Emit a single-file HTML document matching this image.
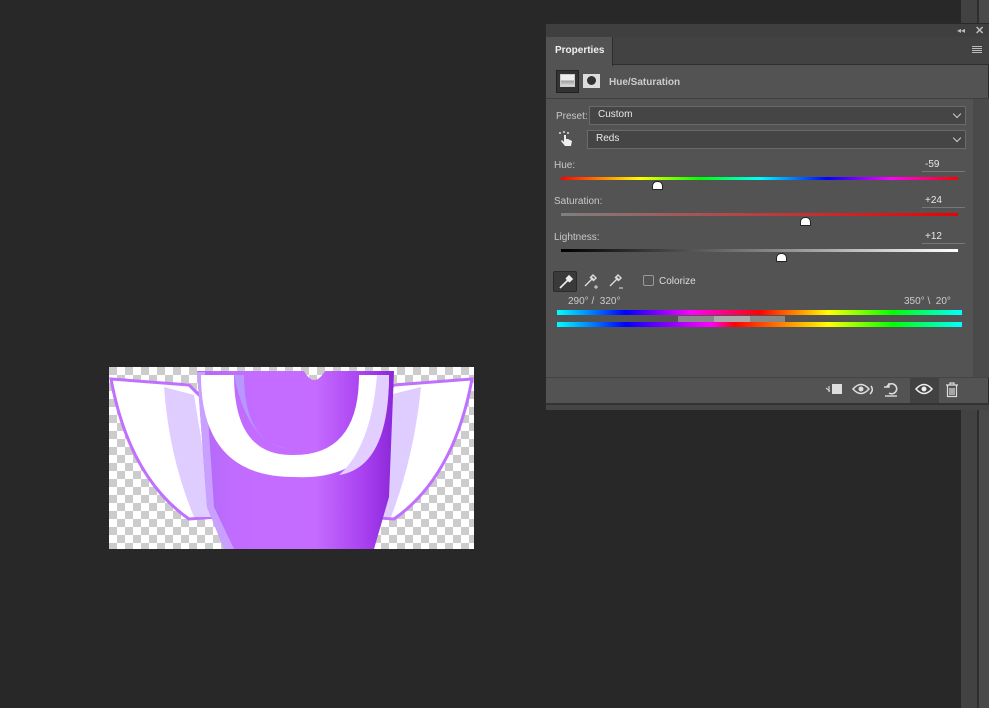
<!DOCTYPE html>
<html><head><style>
*{margin:0;padding:0;box-sizing:border-box}
body{width:989px;height:708px;background:#282828;position:relative;overflow:hidden;font-family:"Liberation Sans",sans-serif;font-size:10px;color:#ddd}
.a{position:absolute}
.dd{position:absolute;background:#454545;border:1px solid #6a6a6a;height:19px;color:#e8e8e8;padding:2px 8px;font-size:10px}
.dd:after{content:"";position:absolute;right:5px;top:4px;width:5px;height:5px;border-right:1px solid #ccc;border-bottom:1px solid #ccc;transform:rotate(45deg)}
.lbl{position:absolute;color:#c8c8c8;font-size:10px}
.val{position:absolute;color:#e8e8e8;font-size:10px;border-bottom:1px solid #777;width:43px;padding-left:3px;height:13px}
.thumb{position:absolute;width:11px;height:9px;background:#fff;border:1px solid #222;border-radius:5px 5px 1px 1px}
</style></head><body>
<div class="a" style="left:961px;top:0;width:16px;height:708px;background:#424242"></div>
<div class="a" style="left:977px;top:0;width:2px;height:708px;background:#2e2e2e"></div>
<div class="a" style="left:979px;top:0;width:10px;height:708px;background:#4a4a4a"></div>

<!-- image -->
<svg class="a" style="left:109px;top:367px" width="365" height="182" viewBox="0 0 365 182">
<defs><pattern id="ck" width="16" height="16" patternUnits="userSpaceOnUse"><rect width="16" height="16" fill="#fff"/><rect width="8" height="8" fill="#ccc"/><rect x="8" y="8" width="8" height="8" fill="#ccc"/></pattern>
<linearGradient id="bd" x1="0" x2="1"><stop offset="0" stop-color="#b06af5"/><stop offset="0.2" stop-color="#c26cff"/><stop offset="0.6" stop-color="#c56cff"/><stop offset="0.85" stop-color="#a840f0"/><stop offset="1" stop-color="#8a28d8"/></linearGradient></defs>
<rect width="365" height="182" fill="url(#ck)"/>
<path d="M2 12 L80 18 L100 38 L110 150 L80 152 Q20 110 2 12Z" fill="#fff" stroke="#c070ff" stroke-width="3"/>
<path d="M55 20 L85 28 L105 150 L85 150 Q60 90 55 20Z" fill="#e0cdff"/>
<path d="M363 12 L285 18 L265 38 L255 150 L285 152 Q345 110 363 12Z" fill="#fff" stroke="#c070ff" stroke-width="3"/>
<path d="M312 20 L280 28 L262 150 L282 150 Q305 90 312 20Z" fill="#e0cdff"/>
<path d="M88 4 L195 4 Q205 22 216 4 L285 4 L280 130 L265 182 L115 182 L98 140 Z" fill="url(#bd)"/>
<path d="M88 5 L98 140 L115 182 L125 182 L105 140 L96 5Z" fill="#c9a0ff"/>
<path d="M92 8 L125 8 Q125 90 185 88 Q250 88 250 8 L280 8 Q280 115 185 110 Q92 110 92 8Z" fill="#fff"/>
<path d="M250 8 L280 8 Q280 100 230 108 Q262 80 268 8Z" fill="#e2cfff"/>
<path d="M125 8 L135 8 Q135 80 185 82 Q140 82 125 8Z" fill="#b898ff"/>
</svg>

<!-- panel -->
<div class="a" style="left:545px;top:23px;width:444px;height:387px;background:#535353;border:1px solid #2a2a2a"></div>
<div class="a" style="left:546px;top:24px;width:443px;height:13px;background:#3f3f3f"></div>
<div class="a" style="left:957px;top:26px;font-size:8px;color:#bbb">◂◂</div>
<div class="a" style="left:975px;top:24px;font-size:11px;color:#bbb;font-weight:bold">✕</div>
<div class="a" style="left:546px;top:37px;width:443px;height:28px;background:#424242;border-bottom:1px solid #2e2e2e"></div>
<div class="a" style="left:546px;top:37px;width:67px;height:29px;background:#535353;border-right:1px solid #2e2e2e;color:#f0f0f0;font-weight:bold;padding:8px 0 0 9px;font-size:10px">Properties</div>
<div class="a" style="left:972px;top:46px;width:10px;height:1px;background:#bbb;box-shadow:0 2px #bbb,0 4px #bbb,0 6px #bbb"></div>
<!-- header row -->
<div class="a" style="left:556px;top:70px;width:23px;height:23px;background:#333;border:1px solid #222"></div>
<div class="a" style="left:560px;top:74px;width:15px;height:13px;background:linear-gradient(#eee 50%,#999 50%,#ddd);border:1px solid #ccc"></div>
<div class="a" style="left:583px;top:74px;width:17px;height:14px;background:#ddd"></div>
<div class="a" style="left:587px;top:76px;width:9px;height:9px;border-radius:50%;background:#333"></div>
<div class="a" style="left:609px;top:77px;color:#ccc;font-weight:bold;font-size:10px">Hue/Saturation</div>
<div class="a" style="left:546px;top:98px;width:443px;height:1px;background:#3f3f3f"></div>
<div class="a" style="left:973px;top:99px;width:16px;height:278px;background:#4a4a4a"></div>
<!-- preset -->
<div class="lbl" style="left:556px;top:111px">Preset:</div>
<div class="dd" style="left:589px;top:106px;width:377px">Custom</div>
<svg class="a" style="left:558px;top:130px" width="16" height="18" viewBox="0 0 16 18"><path d="M1 3h2M3 1v0M9 3h2M6 1v2" stroke="#ddd" stroke-width="1.5"/><path d="M6 5v7l-2-2-1 1 4 5h6l1-5-4-2h-2V5z" fill="#eee"/></svg>
<div class="dd" style="left:587px;top:130px;width:379px">Reds</div>
<!-- sliders -->
<div class="lbl" style="left:554px;top:160px">Hue:</div>
<div class="val" style="left:922px;top:159px">-59</div>
<div class="a" style="left:561px;top:177px;width:397px;height:3px;background:linear-gradient(90deg,#f00,#ff0 20%,#0f0 35%,#0ff 50%,#00f 67%,#f0f 83%,#f00)"></div>
<div class="thumb" style="left:652px;top:181px"></div>
<div class="lbl" style="left:554px;top:196px">Saturation:</div>
<div class="val" style="left:922px;top:195px">+24</div>
<div class="a" style="left:561px;top:213px;width:397px;height:3px;background:linear-gradient(90deg,#808080,#e00)"></div>
<div class="thumb" style="left:800px;top:217px"></div>
<div class="lbl" style="left:554px;top:232px">Lightness:</div>
<div class="val" style="left:922px;top:231px">+12</div>
<div class="a" style="left:561px;top:249px;width:397px;height:3px;background:linear-gradient(90deg,#000,#808080 50%,#fff)"></div>
<div class="thumb" style="left:776px;top:253px"></div>
<!-- eyedroppers -->
<div class="a" style="left:553px;top:271px;width:24px;height:21px;background:#3a3a3a;border:1px solid #2a2a2a;border-radius:2px"></div>
<svg class="a" style="left:557px;top:273px" width="18" height="18" viewBox="0 0 18 18"><path d="M3 15l8-8M9 5l4 4M12 3l3 3-2 2-3-3z" stroke="#eee" stroke-width="1.6" fill="#eee"/></svg>
<svg class="a" style="left:582px;top:273px" width="18" height="18" viewBox="0 0 18 18"><path d="M3 13l7-7M8 4l4 4M11 2l3 3-2 2-3-3z" stroke="#ddd" stroke-width="1.4" fill="none"/><path d="M12 14h4M14 12v4" stroke="#ddd"/></svg>
<svg class="a" style="left:607px;top:273px" width="18" height="18" viewBox="0 0 18 18"><path d="M3 13l7-7M8 4l4 4M11 2l3 3-2 2-3-3z" stroke="#ddd" stroke-width="1.4" fill="none"/><path d="M12 15h4" stroke="#ddd"/></svg>
<div class="a" style="left:643px;top:275px;width:11px;height:11px;border:1px solid #999;border-radius:2px"></div>
<div class="a" style="left:659px;top:276px;color:#ddd">Colorize</div>
<div class="a" style="left:568px;top:296px;color:#ccc;font-size:10px">290° /&nbsp; 320°</div>
<div class="a" style="left:904px;top:296px;color:#ccc;font-size:10px">350° \&nbsp; 20°</div>
<div class="a" style="left:557px;top:310px;width:405px;height:5px;background:linear-gradient(90deg,#0ff,#00f 17%,#f0f 33%,#f00 50%,#ff0 67%,#0f0 83%,#0ff)"></div>
<div class="a" style="left:678px;top:316px;width:107px;height:6px;background:#888"></div>
<div class="a" style="left:714px;top:316px;width:36px;height:6px;background:#aaa"></div>
<div class="a" style="left:557px;top:322px;width:405px;height:5px;background:linear-gradient(90deg,#0ff,#00f 17%,#c0f 33%,#f0f 38%,#f00 44%,#ff0 67%,#0f0 83%,#0ff)"></div>
<!-- footer -->
<div class="a" style="left:546px;top:377px;width:443px;height:1px;background:#444"></div>
<div class="a" style="left:910px;top:378px;width:29px;height:25px;background:#424242"></div>
<svg class="a" style="left:824px;top:382px" width="20" height="14" viewBox="0 0 20 14"><rect x="8" y="2" width="10" height="10" fill="#ddd"/><path d="M2 6l4 3M5 4v6" stroke="#ccc" stroke-width="1.2"/></svg>
<svg class="a" style="left:852px;top:382px" width="22" height="14" viewBox="0 0 22 14"><path d="M1 7q8-9 16 0q-8 9-16 0z" fill="none" stroke="#ddd" stroke-width="1.5"/><circle cx="9" cy="7" r="2.5" fill="#ddd"/><path d="M19 4q3 4-1 8" stroke="#ddd" stroke-width="1.5" fill="none"/></svg>
<svg class="a" style="left:883px;top:381px" width="16" height="16" viewBox="0 0 16 16"><path d="M4 6a5 5 0 1 1 2 6" fill="none" stroke="#ddd" stroke-width="1.6"/><path d="M1 6h5V2" fill="none" stroke="#ddd" stroke-width="1.4"/><path d="M2 15h12" stroke="#ddd" stroke-width="1.4"/></svg>
<svg class="a" style="left:915px;top:383px" width="18" height="12" viewBox="0 0 18 12"><path d="M1 6q8-9 16 0q-8 9-16 0z" fill="none" stroke="#eee" stroke-width="1.6"/><circle cx="9" cy="6" r="2.5" fill="#eee"/></svg>
<svg class="a" style="left:945px;top:382px" width="14" height="16" viewBox="0 0 14 16"><path d="M1 3h12M5 3V1h4v2M2.5 3.5v11h9v-11M5 6v7M7 6v7M9 6v7" fill="none" stroke="#ddd" stroke-width="1.2"/></svg>
<div class="a" style="left:546px;top:403px;width:443px;height:2px;background:#333"></div>
<div class="a" style="left:546px;top:405px;width:443px;height:5px;background:#454545"></div>
</body></html>
